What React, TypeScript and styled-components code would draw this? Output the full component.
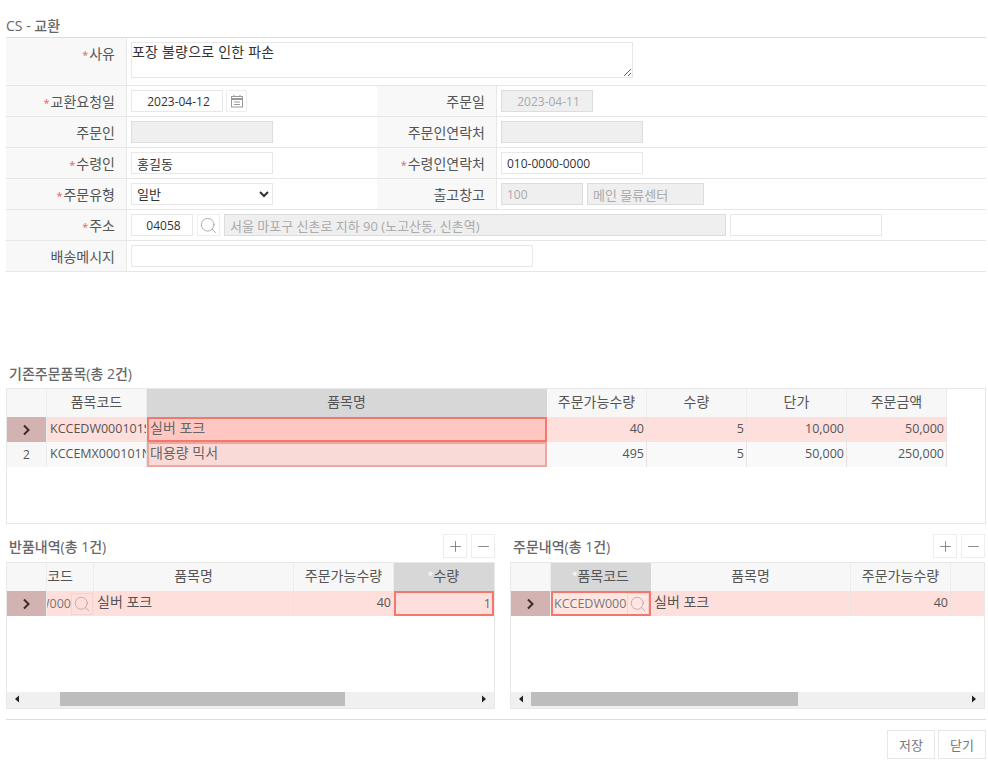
import React from "react";
import styled, { createGlobalStyle } from "styled-components";
import { Search, Plus, Minus } from "lucide-react";

const Global = createGlobalStyle`
  html, body { margin: 0; padding: 0; background: #fff; }
  body { font-family: "Open Sans", "Noto Sans CJK KR", sans-serif; font-size: 12px; color: #444; }
  * { box-sizing: border-box; }
`;

const Page = styled.div`
  width: 988px;
  height: 763px;
  padding: 16px 2px 0 6px;
  overflow: hidden;
`;
const PageTitle = styled.div`
  height: 21px;
  font-size: 14px;
  font-weight: 500;
  line-height: 18px;
  padding-top: 1px;
  color: #666;
`;
const Form = styled.div`
  border-top: 1px solid #ddd;
  width: 980px;
`;
const FormRow = styled.div<{ $h?: number }>`
  display: flex;
  height: ${(p) => p.$h ?? 31}px;
  border-bottom: 1px solid #e6e6e6;
`;
const Label = styled.div<{ $w?: number }>`
  width: ${(p) => p.$w ?? 121}px;
  flex: none;
  background: #f8f8f8;
  border-right: 1px solid #e8e8e8;
  display: flex;
  justify-content: flex-end;
  padding: 4px 11px 0 0;
  font-size: 14px;
  line-height: 24px;
  color: #555;
`;
const Req = styled.span`
  color: #e8605f;
  font-size: 11px;
  margin: 1px 1px 0 0;
`;
const Value = styled.div<{ $w?: number; $gap?: number }>`
  width: ${(p) => (p.$w ? `${p.$w}px` : "auto")};
  flex: ${(p) => (p.$w ? "none" : 1)};
  display: flex;
  align-items: flex-start;
  gap: ${(p) => p.$gap ?? 4}px;
  padding: 4px 0 0 4px;
`;
const Field = styled.input<{ $w: number; $center?: boolean; $ko?: boolean }>`
  width: ${(p) => p.$w}px;
  height: 22px;
  flex: none;
  border: 1px solid #e8e8e8;
  background: #fff;
  padding: ${(p) => (p.$center ? "0 3px 0 6px" : "0 5px")};
  font-family: inherit;
  font-size: ${(p) => (p.$ko ? 13 : 12)}px;
  color: #333;
  text-align: ${(p) => (p.$center ? "center" : "left")};
  outline: none;
  &:disabled {
    background: #efefef;
    border-color: #ddd;
    color: #aaa;
  }
`;
const Memo = styled.textarea`
  width: 502px;
  height: 36px;
  border: 1px solid #e8e8e8;
  padding: 0;
  font-family: inherit;
  font-size: 14px;
  letter-spacing: 0.2px;
  line-height: 18px;
  color: #333;
  outline: none;
`;
const Pick = styled.select`
  width: 142px;
  height: 22px;
  border: 1px solid #e8e8e8;
  background: #fff;
  padding: 0 1px;
  font-family: inherit;
  font-size: 13px;
  color: #333;
  outline: none;
`;
const IconBox = styled.div<{ $w: number }>`
  width: ${(p) => p.$w}px;
  height: 22px;
  flex: none;
  border: 1px solid #eee;
  display: flex;
  align-items: center;
  justify-content: center;
  color: #999;
`;

const SectionTitle = styled.div`
  font-size: 14px;
  font-weight: 500;
  color: #666;
  line-height: 18px;
  padding-left: 3px;
`;
const ExistingHeader = styled(SectionTitle)`
  margin-top: 93px;
  height: 23px;
`;
const GridBox = styled.div<{ $h: number }>`
  height: ${(p) => p.$h}px;
  border: 1px solid #e8e8e8;
  display: flex;
  flex-direction: column;
  overflow: hidden;
  background: #fff;
`;
const Row = styled.div<{ $h: number }>`
  display: flex;
  flex: none;
  height: ${(p) => p.$h}px;
`;
const Empty = styled.div`
  flex: 1;
`;
const HeadCell = styled.div<{ $w: number; $active?: boolean; $end?: boolean }>`
  width: ${(p) => p.$w}px;
  flex: none;
  background: ${(p) => (p.$active ? "#d7d7d7" : "#f7f7f7")};
  border-right: 1px solid ${(p) => (p.$active ? "#d7d7d7" : "#ececec")};
  display: flex;
  align-items: center;
  justify-content: ${(p) => (p.$end ? "flex-end" : "center")};
  padding: 0 ${(p) => (p.$end ? "20px" : "0")} 5px 0;
  font-size: 14px;
  color: #555;
  overflow: hidden;
  white-space: nowrap;
`;
const Star = styled.span`
  color: #fff;
  font-size: 10px;
`;
const IndexCell = styled.div<{ $sel?: boolean }>`
  width: 40px;
  flex: none;
  background: ${(p) => (p.$sel ? "#d3b3b1" : "#f7f7f7")};
  border-right: 1px solid #ececec;
  display: flex;
  align-items: center;
  justify-content: center;
  color: #555;
`;
const Cell = styled.div<{ $w: number; $bg: string; $right?: boolean; $ko?: boolean }>`
  width: ${(p) => p.$w}px;
  flex: none;
  background: ${(p) => p.$bg};
  border-right: 1px solid #ebe3e2;
  display: flex;
  align-items: center;
  justify-content: ${(p) => (p.$right ? "flex-end" : "flex-start")};
  padding: 0 2px ${(p) => (p.$ko ? 5 : 2)}px 3px;
  font-size: ${(p) => (p.$ko ? 14 : 12.5)}px;
  color: #555;
  overflow: hidden;
  white-space: nowrap;
`;
const Marked = styled.div<{ $w: number; $bg: string; $line: string; $right?: boolean }>`
  width: ${(p) => p.$w}px;
  flex: none;
  background: ${(p) => p.$bg};
  border: 2px solid ${(p) => p.$line};
  display: flex;
  align-items: center;
  justify-content: ${(p) => (p.$right ? "flex-end" : "flex-start")};
  padding: 0 1px ${(p) => (p.$right ? 0 : 5)}px 1px;
  font-size: ${(p) => (p.$right ? 12.5 : 14)}px;
  color: #666;
  overflow: hidden;
  white-space: nowrap;
`;
const ClipCode = styled.div<{ $w: number }>`
  width: ${(p) => p.$w}px;
  flex: none;
  background: #ffdfdc;
  border-right: 1px solid #ebe3e2;
  display: flex;
  align-items: center;
  justify-content: flex-end;
  overflow: hidden;
  white-space: nowrap;
  font-size: 12.5px;
  color: #777;
`;
const CodeBox = styled.div`
  width: 100px;
  flex: none;
  height: 25px;
  background: #ffe6e3;
  border: 2px solid #f4776c;
  display: flex;
  align-items: center;
  overflow: hidden;
  white-space: nowrap;
  padding-left: 1px;
  color: #777;
`;
const CodeText = styled.span`
  flex: 1;
  overflow: hidden;
  font-size: 12.5px;
`;
const RowSearch = styled.div`
  width: 22px;
  height: 22px;
  flex: none;
  border: 1px solid #f3d3d0;
  display: flex;
  align-items: center;
  justify-content: center;
  color: #b59a98;
`;
const Track = styled.div`
  height: 16px;
  flex: none;
  background: #f0f0f0;
  display: flex;
  align-items: stretch;
  padding-bottom: 2px;
`;
const Arrow = styled.div<{ $w: number }>`
  width: ${(p) => p.$w}px;
  flex: none;
  display: flex;
  align-items: center;
  justify-content: center;
`;
const Thumb = styled.div<{ $w: number }>`
  width: ${(p) => p.$w}px;
  flex: none;
  background: #bdbdbd;
`;
const Fill = styled.div`
  flex: 1;
`;
const Lower = styled.div`
  display: grid;
  grid-template-columns: 489px 475px;
  column-gap: 15px;
  margin-top: 10px;
  width: 980px;
`;
const PanelHead = styled.div`
  height: 28px;
  display: flex;
  align-items: flex-start;
  justify-content: space-between;
`;
const PanelTitle = styled(SectionTitle)`
  padding-top: 4px;
`;
const Tools = styled.div`
  display: flex;
  gap: 4px;
`;
const ToolBtn = styled.div`
  width: 24px;
  height: 24px;
  border: 1px solid #eee;
  display: flex;
  align-items: center;
  justify-content: center;
  color: #777;
`;
const Footer = styled.div`
  width: 980px;
  margin-top: 10px;
  border-top: 1px solid #ddd;
  padding-top: 10px;
  display: flex;
  justify-content: flex-end;
  gap: 3px;
`;
const FootBtn = styled.div`
  width: 48px;
  height: 29px;
  border: 1px solid #e8e8e8;
  display: flex;
  align-items: center;
  justify-content: center;
  font-size: 13px;
  color: #777;
`;

const Chevron = () => (
  <svg width="9" height="12" viewBox="0 0 9 12">
    <path d="M2 1.5 L6.5 6 L2 10.5" fill="none" stroke="#3c2a2a" strokeWidth="2" />
  </svg>
);
const Calendar = () => (
  <svg width="14" height="14" viewBox="0 0 14 14" fill="none" stroke="#999">
    <rect x="1.5" y="2.5" width="11" height="10.5" />
    <path d="M1.5 5 H12.5" strokeWidth="2" />
    <path d="M4 1 V3 M10 1 V3 M4 8 H10 M4 10.5 H10" />
  </svg>
);
const Tri = ({ right }: { right?: boolean }) => (
  <svg width="6" height="8" viewBox="0 0 6 8">
    <path d={right ? "M1 0.5 L5 4 L1 7.5 Z" : "M5 0.5 L1 4 L5 7.5 Z"} fill="#222" />
  </svg>
);
const Scrollbar = ({ lead, thumb }: { lead: number; thumb: number }) => (
  <Track>
    <Arrow $w={20}><Tri /></Arrow>
    <Arrow $w={lead - 20} />
    <Thumb $w={thumb} />
    <Fill />
    <Arrow $w={20}><Tri right /></Arrow>
  </Track>
);
const Req1 = () => <Req>*</Req>;

export default function App() {
  const sel = "#ffdfdc";
  const alt = "#f9f9f9";
  return (
    <Page>
      <Global />
      <PageTitle>CS - 교환</PageTitle>
      <Form>
        <FormRow $h={48}>
          <Label><Req1 />사유</Label>
          <Value><Memo readOnly value="포장 불량으로 인한 파손" /></Value>
        </FormRow>
        <FormRow>
          <Label><Req1 />교환요청일</Label>
          <Value $w={250} $gap={3}>
            <Field $w={92} $center readOnly value="2023-04-12" />
            <IconBox $w={21}><Calendar /></IconBox>
          </Value>
          <Label $w={120}>주문일</Label>
          <Value><Field $w={92} $center disabled value="2023-04-11" /></Value>
        </FormRow>
        <FormRow>
          <Label>주문인</Label>
          <Value $w={250}><Field $w={142} disabled value="" /></Value>
          <Label $w={120}>주문인연락처</Label>
          <Value><Field $w={142} disabled value="" /></Value>
        </FormRow>
        <FormRow>
          <Label><Req1 />수령인</Label>
          <Value $w={250}><Field $w={142} $ko readOnly value="홍길동" /></Value>
          <Label $w={120}><Req1 />수령인연락처</Label>
          <Value><Field $w={142} readOnly value="010-0000-0000" /></Value>
        </FormRow>
        <FormRow>
          <Label><Req1 />주문유형</Label>
          <Value $w={250}>
            <Pick defaultValue="일반"><option>일반</option></Pick>
          </Value>
          <Label $w={120}>출고창고</Label>
          <Value>
            <Field $w={82} disabled value="100" />
            <Field $w={117} $ko disabled value="메인 물류센터" />
          </Value>
        </FormRow>
        <FormRow>
          <Label><Req1 />주소</Label>
          <Value>
            <Field $w={62} $center readOnly value="04058" />
            <IconBox $w={23}><Search size={19} strokeWidth={1} /></IconBox>
            <Field $w={502} $ko disabled value="서울 마포구 신촌로 지하 90 (노고산동, 신촌역)" />
            <Field $w={152} readOnly value="" />
          </Value>
        </FormRow>
        <FormRow>
          <Label>배송메시지</Label>
          <Value><Field $w={402} readOnly value="" /></Value>
        </FormRow>
      </Form>

      <ExistingHeader>기존주문품목(총 2건)</ExistingHeader>
      <GridBox $h={136}>
        <Row $h={28}>
          <HeadCell $w={40} />
          <HeadCell $w={100}>품목코드</HeadCell>
          <HeadCell $w={400} $active>품목명</HeadCell>
          <HeadCell $w={100}>주문가능수량</HeadCell>
          <HeadCell $w={100}>수량</HeadCell>
          <HeadCell $w={100}>단가</HeadCell>
          <HeadCell $w={100}>주문금액</HeadCell>
        </Row>
        <Row $h={25}>
          <IndexCell $sel><Chevron /></IndexCell>
          <Cell $w={100} $bg={sel}>KCCEDW000101S</Cell>
          <Marked $w={400} $bg="#ffc7c1" $line="#f4776c">실버 포크</Marked>
          <Cell $w={100} $bg={sel} $right>40</Cell>
          <Cell $w={100} $bg={sel} $right>5</Cell>
          <Cell $w={100} $bg={sel} $right>10,000</Cell>
          <Cell $w={100} $bg={sel} $right>50,000</Cell>
        </Row>
        <Row $h={25}>
          <IndexCell>2</IndexCell>
          <Cell $w={100} $bg={alt}>KCCEMX000101N</Cell>
          <Marked $w={400} $bg="#fadad6" $line="#eda6a0">대용량 믹서</Marked>
          <Cell $w={100} $bg={alt} $right>495</Cell>
          <Cell $w={100} $bg={alt} $right>5</Cell>
          <Cell $w={100} $bg={alt} $right>50,000</Cell>
          <Cell $w={100} $bg={alt} $right>250,000</Cell>
        </Row>
        <Empty />
      </GridBox>

      <Lower>
        <div>
          <PanelHead>
            <PanelTitle>반품내역(총 1건)</PanelTitle>
            <Tools>
              <ToolBtn><Plus size={17} strokeWidth={1.2} /></ToolBtn>
              <ToolBtn><Minus size={17} strokeWidth={1.2} /></ToolBtn>
            </Tools>
          </PanelHead>
          <GridBox $h={147}>
            <Row $h={28}>
              <HeadCell $w={40} />
              <HeadCell $w={47} $end>코드</HeadCell>
              <HeadCell $w={200}>품목명</HeadCell>
              <HeadCell $w={100}>주문가능수량</HeadCell>
              <HeadCell $w={100} $active><Star>*</Star>수량</HeadCell>
            </Row>
            <Row $h={25}>
              <IndexCell $sel><Chevron /></IndexCell>
              <ClipCode $w={47}>
                W000
                <RowSearch><Search size={18} strokeWidth={1} /></RowSearch>
              </ClipCode>
              <Cell $w={200} $bg={sel} $ko>실버 포크</Cell>
              <Cell $w={100} $bg={sel} $right>40</Cell>
              <Marked $w={100} $bg={sel} $line="#f4776c" $right>1</Marked>
            </Row>
            <Empty />
            <Scrollbar lead={53} thumb={285} />
          </GridBox>
        </div>
        <div>
          <PanelHead>
            <PanelTitle>주문내역(총 1건)</PanelTitle>
            <Tools>
              <ToolBtn><Plus size={17} strokeWidth={1.2} /></ToolBtn>
              <ToolBtn><Minus size={17} strokeWidth={1.2} /></ToolBtn>
            </Tools>
          </PanelHead>
          <GridBox $h={147}>
            <Row $h={28}>
              <HeadCell $w={40} />
              <HeadCell $w={100} $active><Star>*</Star>품목코드</HeadCell>
              <HeadCell $w={200}>품목명</HeadCell>
              <HeadCell $w={100}>주문가능수량</HeadCell>
              <HeadCell $w={40} />
            </Row>
            <Row $h={25}>
              <IndexCell $sel><Chevron /></IndexCell>
              <CodeBox>
                <CodeText>KCCEDW000</CodeText>
                <RowSearch><Search size={18} strokeWidth={1} /></RowSearch>
              </CodeBox>
              <Cell $w={200} $bg={sel} $ko>실버 포크</Cell>
              <Cell $w={100} $bg={sel} $right>40</Cell>
              <Cell $w={40} $bg={sel} />
            </Row>
            <Empty />
            <Scrollbar lead={20} thumb={267} />
          </GridBox>
        </div>
      </Lower>
      <Footer>
        <FootBtn>저장</FootBtn>
        <FootBtn>닫기</FootBtn>
      </Footer>
    </Page>
  );
}
